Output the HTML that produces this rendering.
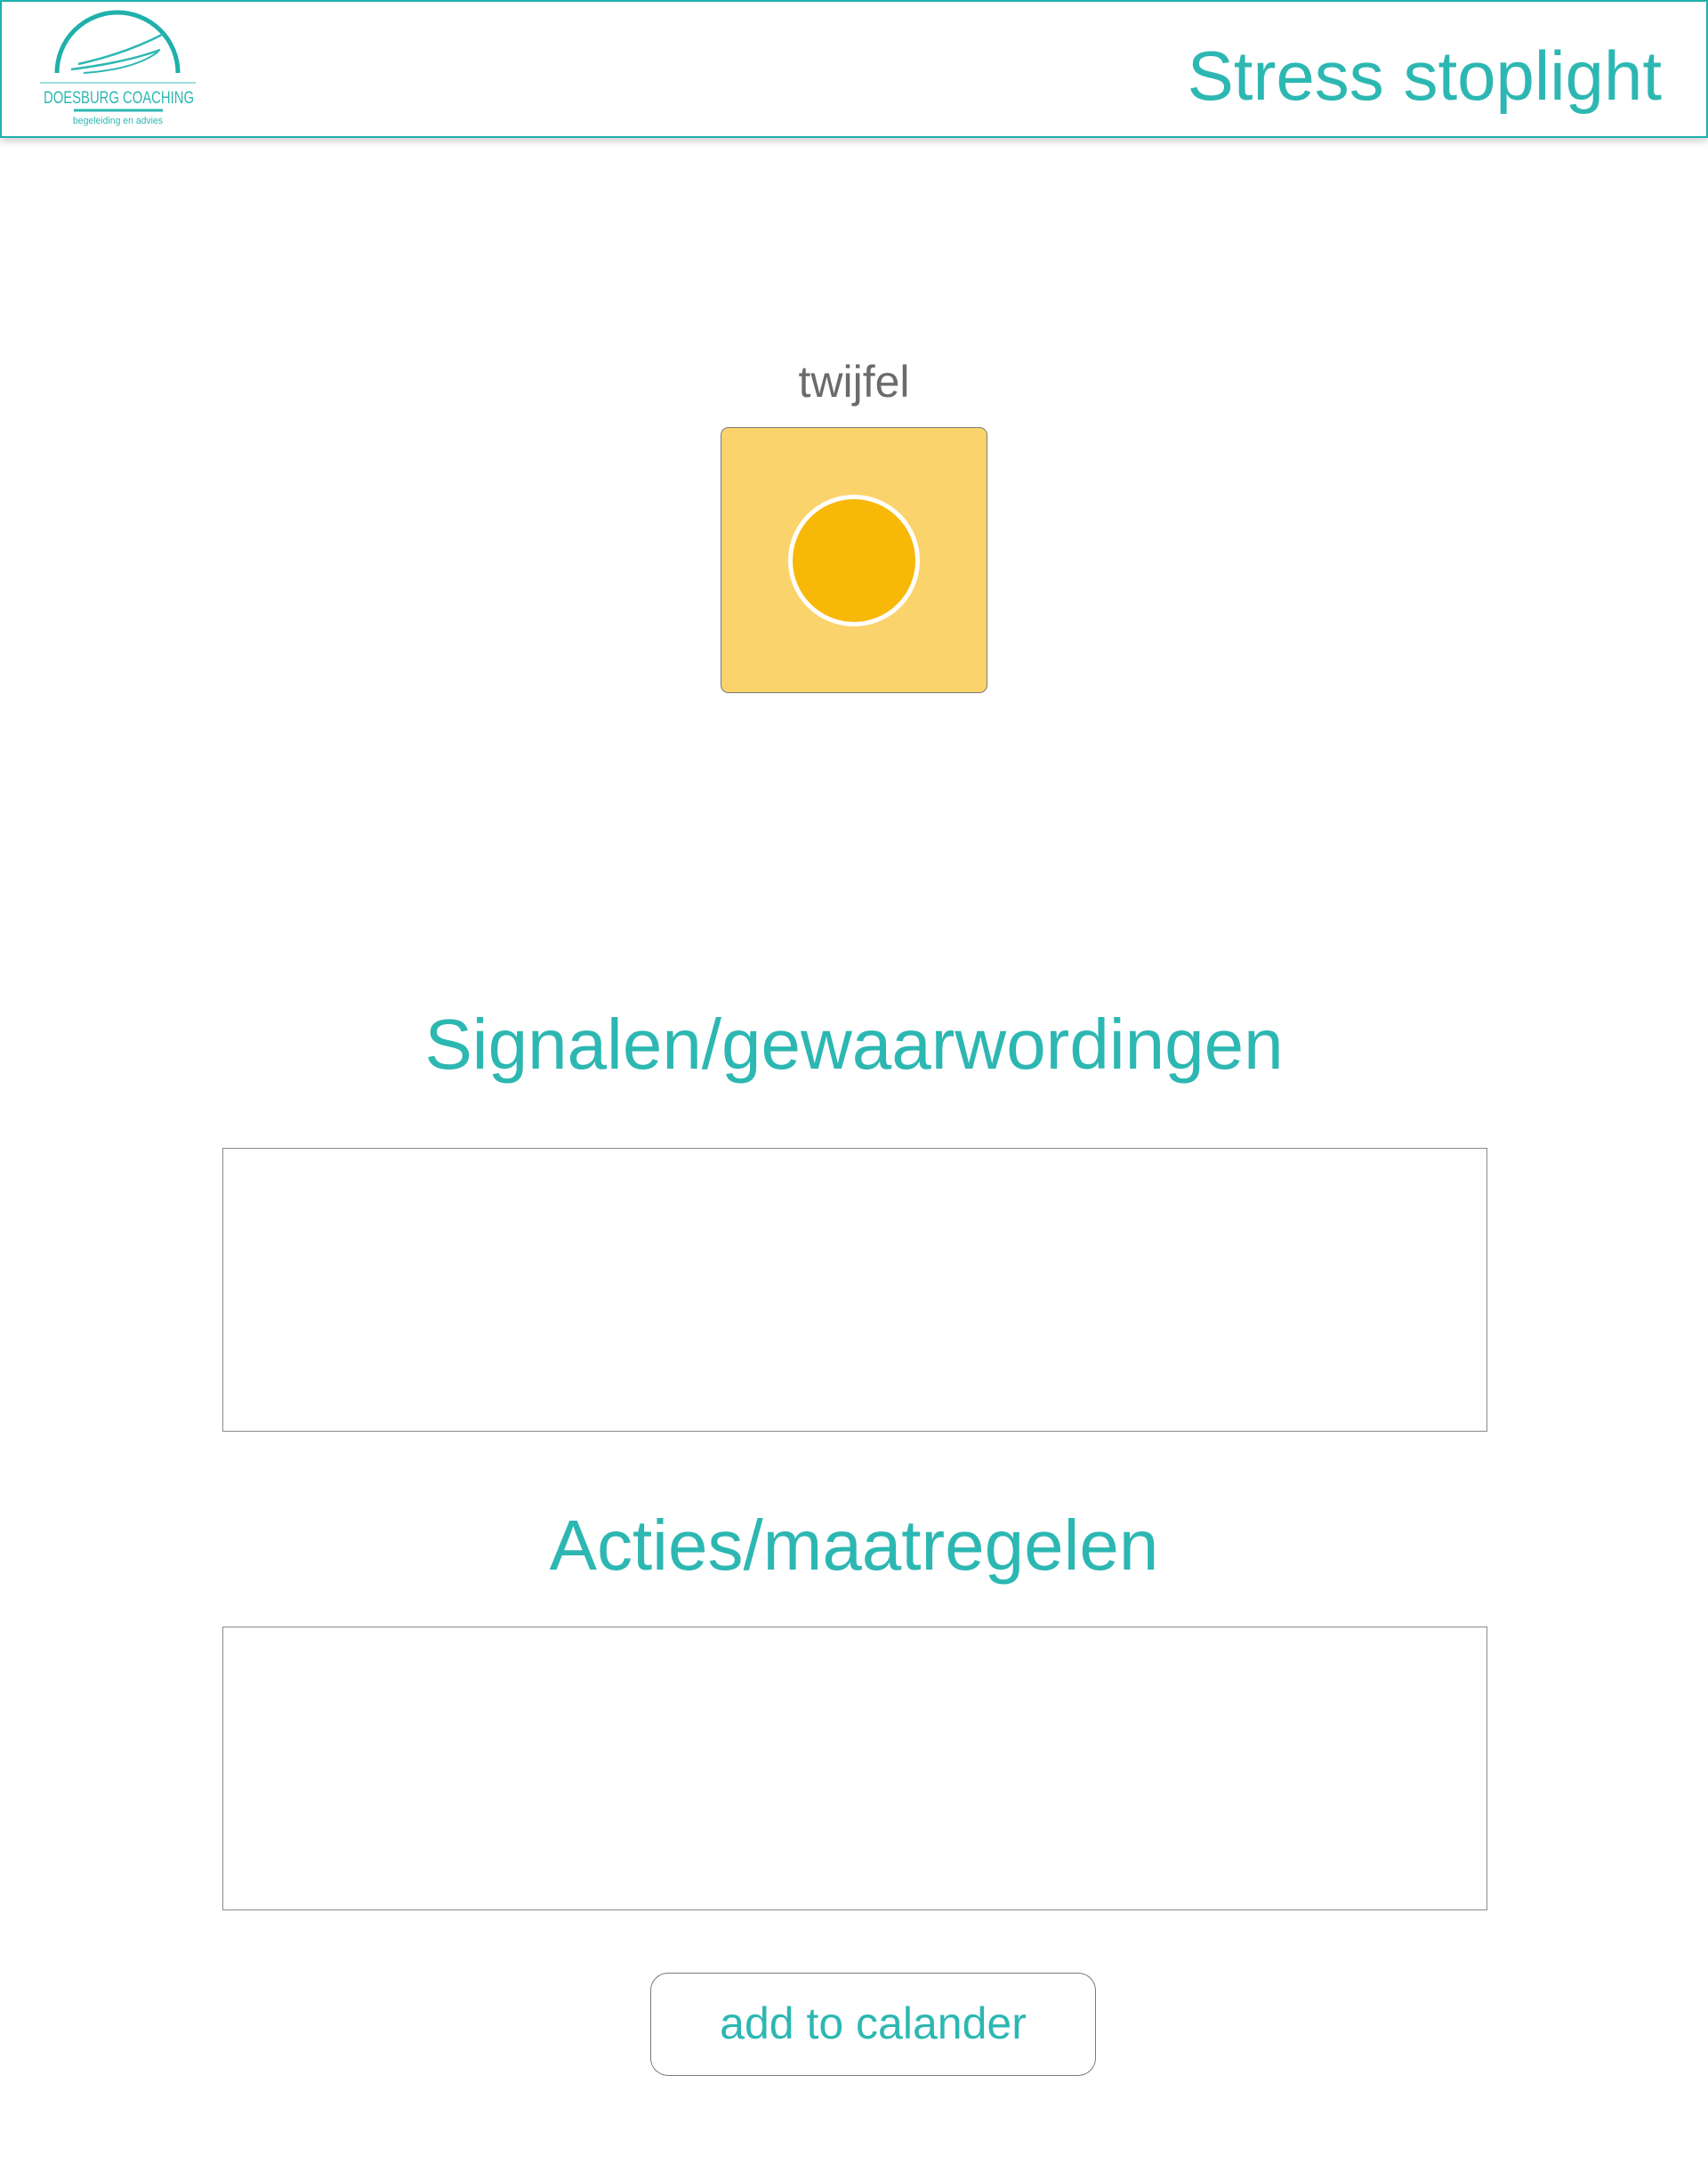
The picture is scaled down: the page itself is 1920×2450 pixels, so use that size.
<!DOCTYPE html>
<html><head><meta charset="utf-8"><style>
*{margin:0;padding:0;box-sizing:border-box}
body{width:1920px;height:2450px;background:#fff;font-family:"Liberation Sans",sans-serif;position:relative;overflow:hidden}
.hdr{position:absolute;left:0;top:0;width:1920px;height:155px;border:2px solid #1fb0ab;background:#fff;box-shadow:0 4px 8px rgba(0,0,0,0.18)}
.title{position:absolute;right:50px;top:38px;font-size:78px;color:#2db7b2;white-space:nowrap}
.abs{position:absolute}
.h{position:absolute;left:0;width:1920px;text-align:center;color:#2db7b2;font-size:80px}
.ta{position:absolute;left:250px;width:1422px;height:319px;border:1.5px solid #8a8a8a}
</style></head><body>
<div class="hdr">
<svg class="abs" style="left:0;top:0" width="260" height="150" viewBox="0 0 260 150">
<path d="M62 80 A68 68 0 0 1 198 80" fill="none" stroke="#1fb0ab" stroke-width="5"/>
<path d="M86 70 Q140 58 182 36" fill="none" stroke="#2db7b2" stroke-width="2.5"/>
<path d="M78 76 Q140 68 178 54" fill="none" stroke="#2db7b2" stroke-width="2.5"/>
<path d="M92 80 Q150 76 176 56" fill="none" stroke="#2db7b2" stroke-width="2"/>
<line x1="43" y1="91" x2="218" y2="91" stroke="#7fd3d0" stroke-width="1.5"/>
<text x="47" y="114" textLength="169" lengthAdjust="spacingAndGlyphs" font-family="Liberation Sans Narrow, Liberation Sans, sans-serif" font-size="19" fill="#2db7b2">DOESBURG COACHING</text>
<line x1="81" y1="122" x2="181" y2="122" stroke="#2db7b2" stroke-width="3"/>
<text x="80" y="137" textLength="101" lengthAdjust="spacingAndGlyphs" font-family="Liberation Sans, sans-serif" font-size="11" fill="#2db7b2">begeleiding en advies</text>
</svg>
<div class="title">Stress stoplight</div>
</div>
<div class="abs" style="left:0;width:1920px;top:400px;text-align:center;font-size:50px;color:#6b6b6b">twijfel</div>
<div class="abs" style="left:810px;top:480px;width:300px;height:299px;background:#fbd36c;border:1.5px solid #7a7a7a;border-radius:9px"></div>
<div class="abs" style="left:886px;top:556px;width:148px;height:148px;border-radius:50%;background:#f8b808;border:5px solid #fff"></div>
<div class="h" style="top:1128px">Signalen/gewaarwordingen</div>
<div class="ta" style="top:1290px"></div>
<div class="h" style="top:1691px">Acties/maatregelen</div>
<div class="ta" style="top:1828px"></div>
<div class="abs" style="left:731px;top:2217px;width:501px;height:116px;border:1.5px solid #7a7a7a;border-radius:20px;text-align:center;line-height:112px;font-size:50px;color:#2db7b2">add to calander</div>
</body></html>
